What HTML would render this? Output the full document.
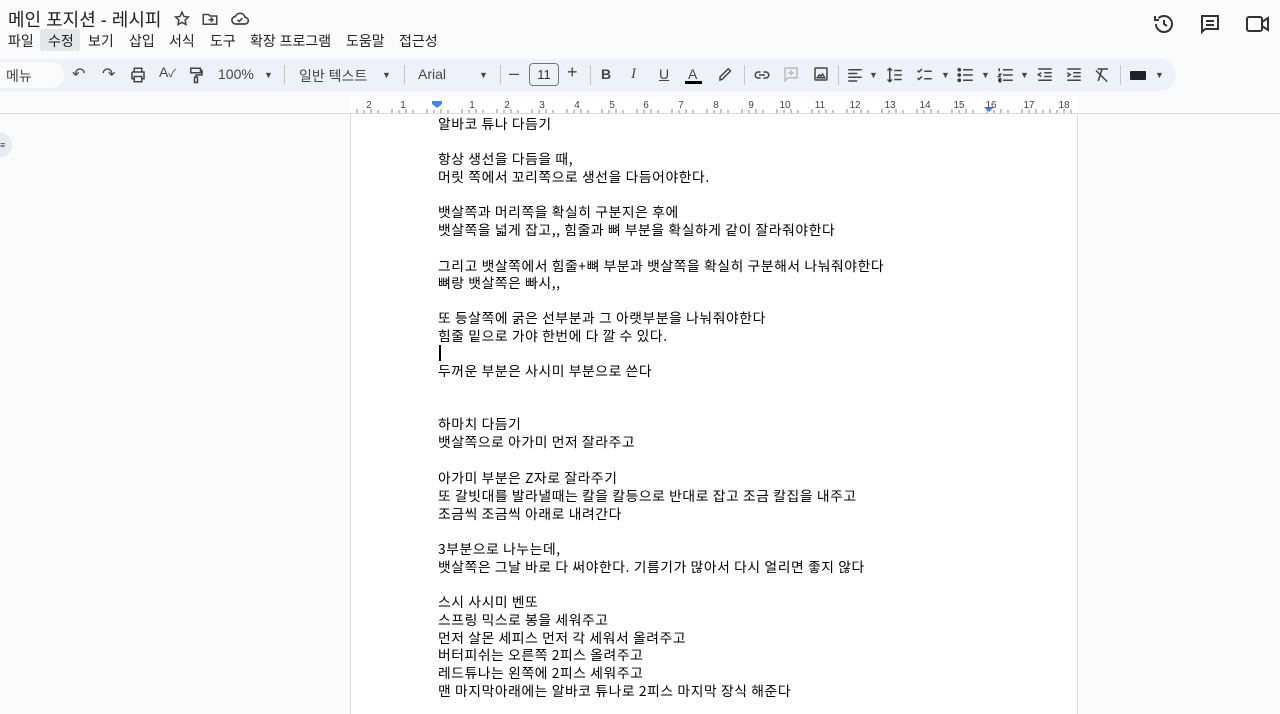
<!DOCTYPE html>
<html><head><meta charset="utf-8">
<style>
*{margin:0;padding:0;box-sizing:border-box}
body{width:1280px;height:699px;overflow:hidden;background:#f9fbfd;font-family:"Liberation Sans","Noto Sans CJK KR",sans-serif;color:#1f1f1f;position:relative}
.a{position:absolute;white-space:nowrap}
.title{left:8px;top:6px;font-size:18px;color:#1f1f1f}
.menu{top:31px;font-size:14px}
.tb{position:absolute;left:0;top:59px;width:1176px;height:32px;background:#edf2fa;border-radius:0 16px 16px 0}
.tbt{font-size:14px;color:#444746;top:66px}
.sep{position:absolute;top:65px;width:1px;height:20px;background:#c7c7c7}
.ruler{position:absolute;left:350px;top:97px;width:728px;height:16px;background:#fff}
.rline{position:absolute;left:0;top:113px;width:1280px;height:1px;background:#dadce0}
.page{position:absolute;left:350px;top:114px;width:728px;height:600px;background:#fff;border-left:1px solid #dadce0;border-right:1px solid #dadce0}
.t{position:absolute;left:438px;font-size:13.8px;letter-spacing:0.6px;color:#000;font-family:"Noto Sans CJK KR","Liberation Sans",sans-serif;line-height:18px}
svg{position:absolute}
</style></head><body>
<div class="a title">메인 포지션 - 레시피</div>
<svg style="left:173px;top:10px" width="18" height="18" viewBox="0 0 24 24" fill="none" stroke="#444" stroke-width="2"><path d="M12 3l2.6 5.6 6 .7-4.5 4.1 1.2 6L12 16.5 6.7 19.4l1.2-6L3.4 9.3l6-.7z"/></svg>
<svg style="left:201px;top:10px" width="18" height="18" viewBox="0 0 24 24" fill="none" stroke="#444" stroke-width="2"><path d="M3 6h7l2 2h9v11H3z"/><path d="M10 13h6M13 10l3 3-3 3"/></svg>
<svg style="left:230px;top:9px" width="20" height="20" viewBox="0 0 24 24" fill="none" stroke="#444" stroke-width="2"><path d="M7 18h11a4 4 0 0 0 0-8 6 6 0 0 0-11.5-1A4.5 4.5 0 0 0 7 18z"/><path d="M9 13l2 2 4-4"/></svg>
<div class="a menu" style="left:40px;top:29px;width:40px;height:22px;background:#e3e6ea;border-radius:3px"></div>
<div class="a menu" style="left:8px">파일</div>
<div class="a menu" style="left:48px">수정</div>
<div class="a menu" style="left:88px">보기</div>
<div class="a menu" style="left:129px">삽입</div>
<div class="a menu" style="left:169px">서식</div>
<div class="a menu" style="left:210px">도구</div>
<div class="a menu" style="left:250px">확장 프로그램</div>
<div class="a menu" style="left:346px">도움말</div>
<div class="a menu" style="left:399px">접근성</div>
<svg style="left:1152px;top:12px" width="24" height="24" viewBox="0 0 24 24" fill="none" stroke="#333" stroke-width="2"><path d="M4 12a8 8 0 1 0 2.5-5.8"/><path d="M3 4v4h4"/><path d="M12 8v4l3 2"/></svg>
<svg style="left:1198px;top:12px" width="24" height="24" viewBox="0 0 24 24" fill="none" stroke="#333" stroke-width="2"><path d="M4 4h16v13H7l-3 3z"/><path d="M8 9h8M8 13h8"/></svg>
<svg style="left:1245px;top:14px" width="28" height="20" viewBox="0 0 28 20" fill="none" stroke="#333" stroke-width="2"><rect x="2" y="3" width="15" height="14" rx="2"/><path d="M17 8l6-4v12l-6-4"/></svg>

<div class="tb"></div>
<div class="a" style="left:0;top:62px;width:64px;height:26px;background:#f9fbfd;border-radius:0 13px 13px 0"></div>
<div class="a tbt" style="left:6px">메뉴</div>
<div class="a tbt" style="left:72px;font-size:16px;top:64px">↶</div>
<div class="a tbt" style="left:102px;font-size:16px;top:64px">↷</div>
<svg style="left:129px;top:66px" width="18" height="18" viewBox="0 0 24 24" fill="none" stroke="#444" stroke-width="2"><path d="M7 8V3h10v5M4 8h16v9h-3M7 17H4V8M7 14h10v7H7z"/></svg>
<div class="a tbt" style="left:159px;top:64px;font-size:14px">A<span style="font-size:11px">✓</span></div>
<svg style="left:187px;top:65px" width="18" height="20" viewBox="0 0 24 24" fill="none" stroke="#444" stroke-width="2"><path d="M5 3h13v6H5zM18 6h2v6h-8v3M10 15h4v7h-4z"/></svg>
<div class="a tbt" style="left:218px">100%</div>
<div class="a tbt" style="left:264px;font-size:9px;top:70px">▼</div>
<div class="sep" style="left:284px"></div>
<div class="a tbt" style="left:299px">일반 텍스트</div>
<div class="a tbt" style="left:382px;font-size:9px;top:70px">▼</div>
<div class="sep" style="left:404px"></div>
<div class="a tbt" style="left:418px">Arial</div>
<div class="a tbt" style="left:479px;font-size:9px;top:70px">▼</div>
<div class="sep" style="left:500px"></div>
<div class="a tbt" style="left:509px;font-size:18px;top:63px">–</div>
<div class="a" style="left:529px;top:63px;width:30px;height:23px;border:1px solid #747775;border-radius:4px;font-size:13px;text-align:center;line-height:21px;color:#333">11</div>
<div class="a tbt" style="left:567px;font-size:18px;top:62px">+</div>
<div class="sep" style="left:590px"></div>
<div class="a tbt" style="left:601px;font-weight:bold">B</div>
<div class="a tbt" style="left:631px;font-style:italic;font-family:'Liberation Serif',serif;font-size:15px">I</div>
<div class="a tbt" style="left:659px;text-decoration:underline">U</div>
<div class="a tbt" style="left:688px">A</div>
<div class="a" style="left:685px;top:81px;width:17px;height:3px;background:#000"></div>
<svg style="left:717px;top:65px" width="18" height="18" viewBox="0 0 24 24" fill="none" stroke="#444" stroke-width="2"><path d="M4 20l3-1 11-11-3-3L4 16z"/></svg>
<div class="sep" style="left:744px"></div>
<svg style="left:752px;top:66px" width="20" height="18" viewBox="0 0 24 24" fill="none" stroke="#444" stroke-width="2"><path d="M10 8H7a4 4 0 0 0 0 8h3M14 8h3a4 4 0 0 1 0 8h-3M8 12h8"/></svg>
<svg style="left:782px;top:65px" width="18" height="18" viewBox="0 0 24 24" fill="none" stroke="#bbb" stroke-width="2"><path d="M4 4h16v13H8l-4 4zM12 7v7M8.5 10.5h7"/></svg>
<svg style="left:812px;top:65px" width="18" height="18" viewBox="0 0 24 24" fill="none" stroke="#444" stroke-width="2"><rect x="4" y="4" width="16" height="16" rx="1"/><path d="M7 17l3-4 2 2 2-3 3 5z"/></svg>
<div class="sep" style="left:838px"></div>
<svg style="left:846px;top:66px" width="18" height="18" viewBox="0 0 24 24" stroke="#444" stroke-width="2"><path d="M3 5h18M3 10h12M3 15h18M3 20h12"/></svg>
<div class="a tbt" style="left:869px;font-size:9px;top:70px">▼</div>
<svg style="left:886px;top:66px" width="18" height="18" viewBox="0 0 24 24" fill="none" stroke="#444" stroke-width="2"><path d="M5 3v18M2 6l3-3 3 3M2 18l3 3 3-3M11 6h10M11 12h10M11 18h10"/></svg>
<svg style="left:916px;top:66px" width="18" height="18" viewBox="0 0 24 24" fill="none" stroke="#444" stroke-width="2"><path d="M2 6l2 2 4-4M2 16l2 2 4-4M11 7h10M11 17h10"/></svg>
<div class="a tbt" style="left:941px;font-size:9px;top:70px">▼</div>
<svg style="left:957px;top:66px" width="18" height="18" viewBox="0 0 24 24" stroke="#444" stroke-width="2"><path d="M8 5h13M8 12h13M8 19h13"/><circle cx="3" cy="5" r="1.5"/><circle cx="3" cy="12" r="1.5"/><circle cx="3" cy="19" r="1.5"/></svg>
<div class="a tbt" style="left:981px;font-size:9px;top:70px">▼</div>
<svg style="left:997px;top:66px" width="18" height="18" viewBox="0 0 24 24" stroke="#444" stroke-width="2"><path d="M8 5h13M8 12h13M8 19h13M3 3v4M2 11h3l-3 3h3M2 17h3v4H2"/></svg>
<div class="a tbt" style="left:1020px;font-size:9px;top:70px">▼</div>
<svg style="left:1036px;top:66px" width="18" height="18" viewBox="0 0 24 24" fill="none" stroke="#444" stroke-width="2"><path d="M3 4h18M11 9h10M11 14h10M3 19h18M7 9l-4 2.5L7 14"/></svg>
<svg style="left:1065px;top:66px" width="18" height="18" viewBox="0 0 24 24" fill="none" stroke="#444" stroke-width="2"><path d="M3 4h18M11 9h10M11 14h10M3 19h18M3 9l4 2.5L3 14"/></svg>
<svg style="left:1093px;top:66px" width="18" height="18" viewBox="0 0 24 24" fill="none" stroke="#444" stroke-width="2"><path d="M6 4h14M12 4l-5 16M4 6l15 15"/></svg>
<div class="sep" style="left:1120px"></div>
<div class="a" style="left:1130px;top:71px;width:16px;height:9px;background:#222;border-radius:1px"></div>
<div class="a tbt" style="left:1155px;font-size:9px;top:70px">▼</div>

<div class="ruler"></div>
<svg style="left:350px;top:97px" width="728" height="17">
<g stroke="#888" stroke-width="1">
<path d="M7 16v-4M14 16v-3M21 16v-4M28 16v-3M42 16v-4M49 16v-3M56 16v-4M63 16v-3M77 16v-4M84 16v-3M91 16v-4M98 16v-3M112 16v-4M119 16v-3M126 16v-4M133 16v-3M147 16v-4M154 16v-3M161 16v-4M168 16v-3M182 16v-4M189 16v-3M196 16v-4M203 16v-3M217 16v-4M224 16v-3M231 16v-4M238 16v-3M252 16v-4M259 16v-3M266 16v-4M273 16v-3M287 16v-4M294 16v-3M301 16v-4M308 16v-3M322 16v-4M329 16v-3M336 16v-4M343 16v-3M357 16v-4M364 16v-3M371 16v-4M378 16v-3M392 16v-4M399 16v-3M406 16v-4M413 16v-3M427 16v-4M434 16v-3M441 16v-4M448 16v-3M462 16v-4M469 16v-3M476 16v-4M483 16v-3M497 16v-4M504 16v-3M511 16v-4M518 16v-3M532 16v-4M539 16v-3M546 16v-4M553 16v-3M567 16v-4M574 16v-3M581 16v-4M588 16v-3M602 16v-4M609 16v-3M616 16v-4M623 16v-3M637 16v-4M644 16v-3M651 16v-4M658 16v-3M672 16v-4M679 16v-3M686 16v-4M693 16v-3M700 16v-4M707 16v-3M714 16v-4M721 16v-3"/>
</g>
<path d="M82 4h10v3l-5 4-5-4z" fill="#4285f4"/>
<path d="M634 10h10l-5 5z" fill="#4285f4"/>
<g font-family="Liberation Sans" font-size="10" fill="#444" text-anchor="middle">
<text x="19" y="11">2</text><text x="53" y="11">1</text><text x="122" y="11">1</text><text x="157" y="11">2</text><text x="192" y="11">3</text><text x="227" y="11">4</text><text x="262" y="11">5</text><text x="296" y="11">6</text><text x="331" y="11">7</text><text x="366" y="11">8</text><text x="401" y="11">9</text><text x="435" y="11">10</text><text x="470" y="11">11</text><text x="505" y="11">12</text><text x="540" y="11">13</text><text x="575" y="11">14</text><text x="609" y="11">15</text><text x="641" y="11">16</text><text x="679" y="11">17</text><text x="714" y="11">18</text>
</g>
</svg>
<div class="rline"></div>
<div class="page"></div>
<div class="a" style="left:-14px;top:132px;width:26px;height:26px;border-radius:13px;background:#e8ecf2"></div>
<div class="a" style="left:0;top:140px;font-size:9px;color:#444">≡</div>

<div class="t" style="top:114px">알바코 튜나 다듬기</div>
<div class="t" style="top:149px">항상 생선을 다듬을 때,</div>
<div class="t" style="top:167px">머릿 쪽에서 꼬리쪽으로 생선을 다듬어야한다.</div>
<div class="t" style="top:202px">뱃살쪽과 머리쪽을 확실히 구분지은 후에</div>
<div class="t" style="top:220px">뱃살쪽을 넓게 잡고,, 힘줄과 뼈 부분을 확실하게 같이 잘라줘야한다</div>
<div class="t" style="top:256px">그리고 뱃살쪽에서 힘줄+뼈 부분과 뱃살쪽을 확실히 구분해서 나눠줘야한다</div>
<div class="t" style="top:273px">뼈랑 뱃살쪽은 빠시,,</div>
<div class="t" style="top:308px">또 등살쪽에 굵은 선부분과 그 아랫부분을 나눠줘야한다</div>
<div class="t" style="top:326px">힘줄 밑으로 가야 한번에 다 깔 수 있다.</div>
<div class="a" style="left:439px;top:345px;width:2px;height:16px;background:#000"></div>
<div class="t" style="top:361px">두꺼운 부분은 사시미 부분으로 쓴다</div>
<div class="t" style="top:414px">하마치 다듬기</div>
<div class="t" style="top:432px">뱃살쪽으로 아가미 먼저 잘라주고</div>
<div class="t" style="top:468px">아가미 부분은 Z자로 잘라주기</div>
<div class="t" style="top:486px">또 갈빗대를 발라낼때는 칼을 칼등으로 반대로 잡고 조금 칼집을 내주고</div>
<div class="t" style="top:504px">조금씩 조금씩 아래로 내려간다</div>
<div class="t" style="top:539px">3부분으로 나누는데,</div>
<div class="t" style="top:557px">뱃살쪽은 그날 바로 다 써야한다. 기름기가 많아서 다시 얼리면 좋지 않다</div>
<div class="t" style="top:592px">스시 사시미 벤또</div>
<div class="t" style="top:610px">스프링 믹스로 봉을 세워주고</div>
<div class="t" style="top:628px">먼저 살몬 세피스 먼저 각 세워서 올려주고</div>
<div class="t" style="top:645px">버터피쉬는 오른쪽 2피스 올려주고</div>
<div class="t" style="top:663px">레드튜나는 왼쪽에 2피스 세워주고</div>
<div class="t" style="top:681px">맨 마지막아래에는 알바코 튜나로 2피스 마지막 장식 해준다</div>
</body></html>
